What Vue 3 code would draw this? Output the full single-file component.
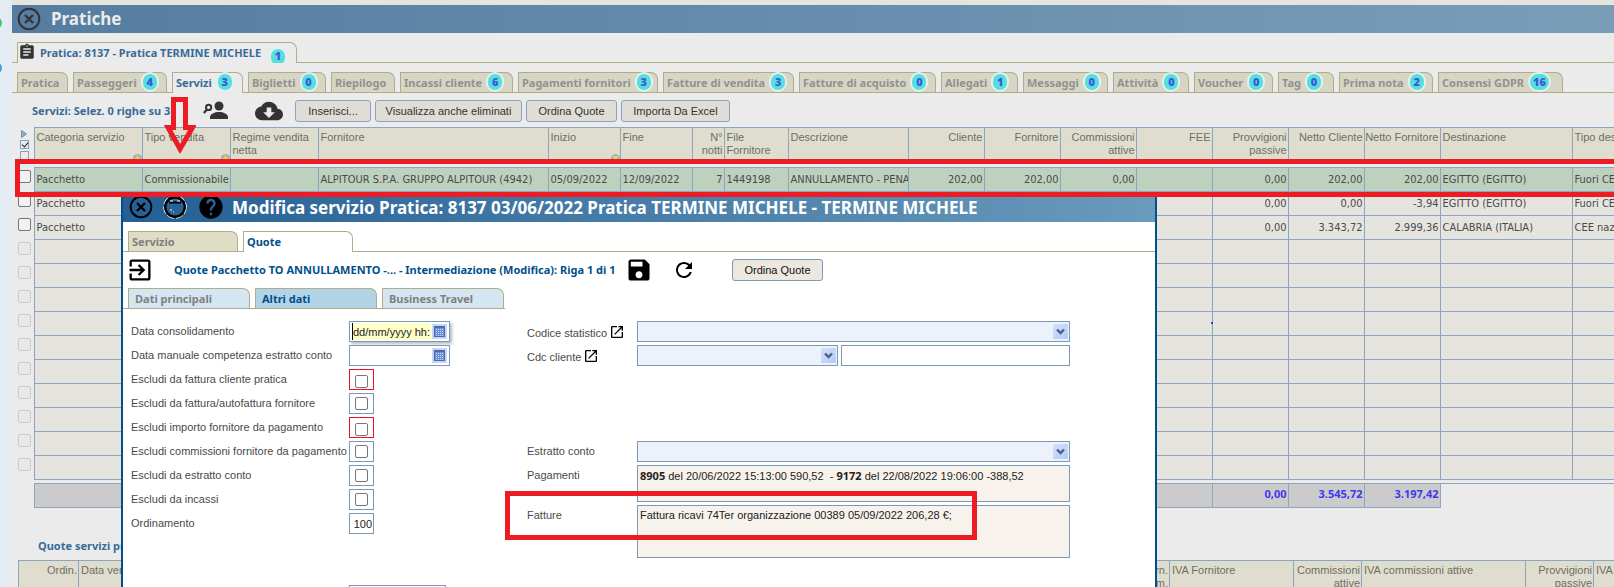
<script setup>
import { ref } from 'vue'

const tabs = [
  { t: 'Pratica', w: 51 },
  { t: 'Passeggeri', n: 4, w: 94 },
  { t: 'Servizi', n: 3, w: 71, on: true },
  { t: 'Biglietti', n: 0, w: 78 },
  { t: 'Riepilogo', w: 64 },
  { t: 'Incassi cliente', n: 6, w: 113 },
  { t: 'Pagamenti fornitori', n: 3, w: 140 },
  { t: 'Fatture di vendita', n: 3, w: 131 },
  { t: 'Fatture di acquisto', n: 0, w: 137 },
  { t: 'Allegati', n: 1, w: 77 },
  { t: 'Messaggi', n: 0, w: 85 },
  { t: 'Attività', n: 0, w: 76 },
  { t: 'Voucher', n: 0, w: 79 },
  { t: 'Tag', n: 0, w: 56 },
  { t: 'Prima nota', n: 2, w: 94 },
  { t: 'Consensi GDPR', n: 16, w: 125 },
]

const cols = [
  { t: 'Categoria servizio', w: 108, sort: 'up' },
  { t: 'Tipo vendita', w: 88, sort: 'up' },
  { t: 'Regime vendita netta', w: 88 },
  { t: 'Fornitore', w: 230 },
  { t: 'Inizio', w: 72, sort: 'down' },
  { t: 'Fine', w: 72 },
  { t: 'N° notti', w: 32, r: true },
  { t: 'File Fornitore', w: 64 },
  { t: 'Descrizione', w: 120 },
  { t: 'Cliente', w: 76, r: true },
  { t: 'Fornitore', w: 76, r: true },
  { t: 'Commissioni attive', w: 76, r: true },
  { t: 'FEE', w: 76, r: true },
  { t: 'Provvigioni passive', w: 76, r: true },
  { t: 'Netto Cliente', w: 76, r: true },
  { t: 'Netto Fornitore', w: 76, r: true },
  { t: 'Destinazione', w: 132 },
  { t: 'Tipo destinazione', w: 120 },
]

const blank = Array(18).fill('')
const rows = [
  ['Pacchetto', 'Commissionabile', '', 'ALPITOUR S.P.A. GRUPPO ALPITOUR (4942)', '05/09/2022', '12/09/2022', '7', '1449198', 'ANNULLAMENTO - PENA', '202,00', '202,00', '0,00', '', '0,00', '202,00', '202,00', 'EGITTO (EGITTO)', 'Fuori CEE'],
  ['Pacchetto', '', '', '', '', '', '', '', '', '', '', '', '', '0,00', '0,00', '-3,94', 'EGITTO (EGITTO)', 'Fuori CEE'],
  ['Pacchetto', '', '', '', '', '', '', '', '', '', '', '', '', '0,00', '3.343,72', '2.999,36', 'CALABRIA (ITALIA)', 'CEE nazionale'],
  ...Array(10).fill(blank),
]
const totals = ['', '', '', '', '', '', '', '', '', '', '', '', '', '0,00', '3.545,72', '3.197,42']

const quoteCols = [
  { t: 'Ordin.', w: 60, r: true },
  { t: 'Data vendita', w: 1023 },
  { t: 'IVA Forn. Comm.', w: 68, r: true },
  { t: 'IVA Fornitore', w: 124 },
  { t: 'Commissioni attive', w: 68, r: true },
  { t: 'IVA commissioni attive', w: 164 },
  { t: 'Provvigioni passive', w: 68, r: true },
  { t: 'IVA passive', w: 90 },
]

const checks = [
  { id: 'c1', t: 'Escludi da fattura cliente pratica', red: true },
  { id: 'c2', t: 'Escludi da fattura/autofattura fornitore' },
  { id: 'c3', t: 'Escludi importo fornitore da pagamento', red: true },
  { id: 'c4', t: 'Escludi commissioni fornitore da pagamento' },
  { id: 'c5', t: 'Escludi da estratto conto' },
  { id: 'c6', t: 'Escludi da incassi' },
]
const flags = ref(checks.map(() => false))
const order = ref('100')
const consolidation = ref('dd/mm/yyyy hh:')

const openIcon = 'M19 19H5V5h7V3H5c-1.11 0-2 .9-2 2v14c0 1.1.89 2 2 2h14c1.1 0 2-.9 2-2v-7h-2v7zM14 3v2h3.59l-9.83 9.83 1.41 1.41L19 6.41V10h2V3h-7z'
</script>

<template>
  <div class="screen">
    <aside class="rail">
      <i class="dot green"></i>
      <i class="dot blue"></i>
    </aside>

    <main class="page">
      <header class="bar">
        <button class="plain" aria-label="Chiudi pratiche">
          <svg width="24" height="24" viewBox="0 0 24 24" fill="none" stroke="#333"><circle cx="12" cy="12" r="10.3" stroke-width="2" /><path d="M8 8l8 8M16 8l-8 8" stroke-width="2.4" /></svg>
        </button>
        <h1>Pratiche</h1>
      </header>

      <div class="tabs outer">
        <button class="tab on">
          <svg width="18" height="18" viewBox="0 0 24 24" fill="#333"><path d="M19 3h-4.18C14.4 1.84 13.3 1 12 1c-1.3 0-2.4.84-2.82 2H5c-1.1 0-2 .9-2 2v14c0 1.1.9 2 2 2h14c1.1 0 2-.9 2-2V5c0-1.1-.9-2-2-2zm-7 0c.55 0 1 .45 1 1s-.45 1-1 1-1-.45-1-1 .45-1 1-1zm2 14H7v-2h7v2zm3-4H7v-2h10v2zm0-4H7V7h10v2z" /></svg>
          <span>Pratica: 8137 - Pratica TERMINE MICHELE</span>
          <b class="badge low">1</b>
        </button>
      </div>

      <nav class="tabs inner">
        <button v-for="x in tabs" :key="x.t" class="tab" :class="{ on: x.on }" :style="{ width: x.w + 'px' }">
          <span>{{ x.t }}</span><b v-if="x.n !== undefined" class="badge">{{ x.n }}</b>
        </button>
      </nav>

      <div class="tools">
        <h2>Servizi: Selez. 0 righe su 3</h2>
        <button class="plain people" aria-label="Cerca passeggero">
          <svg width="26" height="20" viewBox="0 0 26 20" fill="#333"><circle cx="16" cy="5" r="4.5" /><path d="M7 18v-2c0-3 5-5 9-5s9 2 9 5v2z" /><circle cx="5.6" cy="6.4" r="2.6" fill="none" stroke="#333" stroke-width="2" /><path d="M4 8.4L.8 12" stroke="#333" stroke-width="2.2" /></svg>
        </button>
        <button class="plain cloud" aria-label="Scarica">
          <svg width="28" height="28" viewBox="0 0 24 24" fill="#333"><path d="M19.35 10.04C18.67 6.59 15.64 4 12 4 9.11 4 6.6 5.64 5.35 8.04 2.34 8.36 0 10.91 0 14c0 3.31 2.69 6 6 6h13c2.76 0 5-2.24 5-5 0-2.64-2.05-4.78-4.65-4.96zM17 13l-5 5-5-5h3V9h4v4h3z" /></svg>
        </button>
        <div class="buttons">
          <button class="btn w76">Inserisci...</button>
          <button class="btn w147">Visualizza anche eliminati</button>
          <button class="btn w91">Ordina Quote</button>
          <button class="btn w109">Importa Da Excel</button>
        </div>
      </div>

      <div class="scroll">
        <table class="grid">
          <colgroup>
            <col class="pick" />
            <col v-for="(c, i) in cols" :key="i" :style="{ width: c.w + 'px' }" />
          </colgroup>
          <thead>
            <tr>
              <td class="pickcell">
                <div class="picker">
                  <svg width="6" height="8" viewBox="0 0 6 8"><path d="M.5.5L5.5 4 .5 7.5z" fill="#8fb0d4" stroke="#6b8fb8" /></svg>
                  <input type="checkbox" class="mini" checked aria-label="Seleziona tutti" />
                  <input type="checkbox" class="mini" aria-label="Deseleziona tutti" />
                </div>
              </td>
              <th v-for="(c, i) in cols" :key="i" :class="{ r: c.r }">
                {{ c.t }}
                <svg v-if="c.sort" class="sort" width="9" height="9" viewBox="0 0 9 9"><circle cx="4.5" cy="4.5" r="4.5" fill="#9fb3c8" /><path :d="c.sort === 'up' ? 'M4.5 1L7.5 5.5h-6z' : 'M1.5 2h6L4.5 6.5z'" fill="#f0d24a" /></svg>
              </th>
            </tr>
          </thead>
          <tbody>
            <tr class="gap"><td class="pickcell"></td><td colspan="18"></td></tr>
            <tr v-for="(row, i) in rows" :key="i" :class="{ sel: i === 0 }">
              <td class="pickcell"><input type="checkbox" class="box" :disabled="i > 2" :aria-label="'Riga ' + (i + 1)" /></td>
              <td v-for="(v, j) in row" :key="j" :class="{ r: cols[j].r }">{{ v }}</td>
            </tr>
          </tbody>
          <tfoot>
            <tr class="gap small"><td class="pickcell"></td><td colspan="18"></td></tr>
            <tr>
              <td class="pickcell"></td>
              <td v-for="(v, j) in totals" :key="j" class="total">{{ v }}</td>
            </tr>
          </tfoot>
        </table>
      </div>

      <h2 class="subhead">Quote servizi pratica</h2>
      <div class="scroll second">
        <table class="grid quotes">
          <colgroup><col v-for="(c, i) in quoteCols" :key="i" :style="{ width: c.w + 'px' }" /></colgroup>
          <thead>
            <tr>
              <th v-for="(c, i) in quoteCols" :key="i" :class="{ r: c.r }">
                {{ c.t }}
                <svg v-if="i === 0" class="sort left" width="9" height="9" viewBox="0 0 9 9"><circle cx="4.5" cy="4.5" r="4.5" fill="#9fb3c8" /><path d="M4.5 1L7.5 5.5h-6z" fill="#f0d24a" /></svg>
              </th>
            </tr>
          </thead>
        </table>
      </div>
    </main>

    <section class="modal" role="dialog" aria-label="Modifica servizio">
      <header class="mbar">
        <button class="plain" aria-label="Chiudi">
          <svg width="24" height="24" viewBox="0 0 24 24" fill="none" stroke="#000"><circle cx="12" cy="12" r="10.3" stroke-width="2" /><path d="M8 8l8 8M16 8l-8 8" stroke-width="2.4" /></svg>
        </button>
        <button class="plain" aria-label="Riduci">
          <svg width="24" height="24" viewBox="0 0 24 24" fill="none"><circle cx="12" cy="12" r="10.8" stroke="#fff" stroke-width="2" stroke-dasharray="7 2" /><circle cx="12" cy="12" r="9.8" stroke="#000" stroke-width="2.4" /><path d="M6 7.5h12" stroke="#000" stroke-width="2" /><path d="M7 6h3M14 6h3M7 15h2M10 17h1" stroke="#fff" /></svg>
        </button>
        <button class="plain" aria-label="Aiuto">
          <svg width="28" height="28" viewBox="0 0 24 24" fill="#000"><path d="M12 2C6.48 2 2 6.48 2 12s4.48 10 10 10 10-4.48 10-10S17.52 2 12 2zm1 17h-2v-2h2v2zm2.07-7.75l-.9.92C13.45 12.9 13 13.5 13 15h-2v-.5c0-1.1.45-2.1 1.17-2.83l1.24-1.26c.37-.36.59-.86.59-1.41 0-1.1-.9-2-2-2s-2 .9-2 2H8c0-2.21 1.79-4 4-4s4 1.79 4 4c0 .88-.36 1.68-.93 2.25z" /></svg>
        </button>
        <h2>Modifica servizio Pratica: 8137 03/06/2022 Pratica TERMINE MICHELE - TERMINE MICHELE</h2>
      </header>

      <div class="tabs mtabs">
        <button class="tab">Servizio</button>
        <button class="tab on">Quote</button>
      </div>

      <div class="mtools">
        <button class="plain" aria-label="Esci">
          <svg width="28" height="28" viewBox="0 0 24 24"><path d="M10.09 15.59L11.5 17l5-5-5-5-1.41 1.41L12.67 11H3v2h9.67l-2.58 2.59zM19 3H5c-1.11 0-2 .9-2 2v4h2V5h14v14H5v-4H3v4c0 1.1.89 2 2 2h14c1.1 0 2-.9 2-2V5c0-1.1-.9-2-2-2z" /></svg>
        </button>
        <h3>Quote Pacchetto TO ANNULLAMENTO -... - Intermediazione (Modifica): Riga 1 di 1</h3>
        <button class="plain" aria-label="Salva">
          <svg width="28" height="28" viewBox="0 0 24 24"><path d="M17 3H5c-1.11 0-2 .9-2 2v14c0 1.1.89 2 2 2h14c1.1 0 2-.9 2-2V7l-4-4zm-5 16c-1.66 0-3-1.34-3-3s1.34-3 3-3 3 1.34 3 3-1.34 3-3 3zm3-10H5V5h10v4z" /></svg>
        </button>
        <button class="plain reload" aria-label="Aggiorna">
          <svg width="24" height="24" viewBox="0 0 24 24"><path d="M17.65 6.35C16.2 4.9 14.21 4 12 4c-4.42 0-7.99 3.58-7.99 8s3.57 8 7.99 8c3.73 0 6.84-2.55 7.73-6h-2.08c-.82 2.33-3.04 4-5.65 4-3.31 0-6-2.69-6-6s2.69-6 6-6c1.66 0 3.14.69 4.22 1.78L13 11h7V4l-2.35 2.35z" /></svg>
        </button>
        <button class="btn w91 light">Ordina Quote</button>
      </div>

      <div class="tabs stabs">
        <button class="tab">Dati principali</button>
        <button class="tab cur">Altri dati</button>
        <button class="tab">Business Travel</button>
      </div>

      <form class="form" @submit.prevent>
        <div class="fields lefts">
          <label for="d1">Data consolidamento</label>
          <div class="date hot"><input id="d1" v-model="consolidation" /><button type="button" class="cal" aria-label="Apri calendario"><i></i></button></div>
          <label for="d2">Data manuale competenza estratto conto</label>
          <div class="date"><input id="d2" /><button type="button" class="cal" aria-label="Apri calendario"><i></i></button></div>
          <template v-for="(c, i) in checks" :key="c.id">
            <label :for="c.id">{{ c.t }}</label>
            <div class="tick" :class="{ red: c.red }"><input :id="c.id" v-model="flags[i]" type="checkbox" class="box" /></div>
          </template>
          <label for="ord">Ordinamento</label>
          <input id="ord" v-model="order" class="num" />
          <span></span><span></span><span></span><span></span>
          <span></span>
          <input class="extra" aria-label="Altro" />
        </div>

        <div class="fields rights">
          <label for="s1">Codice statistico <svg width="16" height="16" viewBox="0 0 24 24"><path :d="openIcon" /></svg></label>
          <div class="sel-wrap"><select id="s1"></select><span class="arrow"><svg width="9" height="7" viewBox="0 0 9 7"><path d="M1 1.5l3.5 3.5L8 1.5" fill="none" stroke="#4d6185" stroke-width="2.4" /></svg></span></div>
          <label for="s2">Cdc cliente <svg width="16" height="16" viewBox="0 0 24 24"><path :d="openIcon" /></svg></label>
          <div class="pair">
            <div class="sel-wrap"><select id="s2"></select><span class="arrow"><svg width="9" height="7" viewBox="0 0 9 7"><path d="M1 1.5l3.5 3.5L8 1.5" fill="none" stroke="#4d6185" stroke-width="2.4" /></svg></span></div>
            <input class="text" aria-label="Descrizione cdc" />
          </div>
          <span class="hole"></span>
          <label for="s3">Estratto conto</label>
          <div class="sel-wrap"><select id="s3"></select><span class="arrow"><svg width="9" height="7" viewBox="0 0 9 7"><path d="M1 1.5l3.5 3.5L8 1.5" fill="none" stroke="#4d6185" stroke-width="2.4" /></svg></span></div>
          <span class="lab">Pagamenti</span>
          <div class="memo short"><b>8905</b> del 20/06/2022 15:13:00 590,52 &nbsp;- <b>9172</b> del 22/08/2022 19:06:00 -388,52</div>
          <span class="lab">Fatture</span>
          <div class="memo">Fattura ricavi 74Ter organizzazione 00389 05/09/2022 206,28 €;</div>
        </div>
      </form>
    </section>

    <i class="speck"></i>
    <div class="mark row-mark"></div>
    <div class="mark inv-mark"></div>
    <svg class="down" width="32" height="58" viewBox="0 0 32 58"><path d="M9.5 2.5h12v28h7L16 52 4 30.5h5.5z" fill="none" stroke="#ed1c24" stroke-width="5" /></svg>
  </div>
</template>

<style>
html, body { margin: 0; }
</style>

<style scoped>
* { box-sizing: border-box; }
.screen {
  position: relative; display: flex; height: 100vh; overflow: hidden; background: #ebebeb;
  font-family: Tahoma, "Liberation Sans", "Noto Sans", sans-serif; font-size: 11px; line-height: 13px; color: #4a4a4a;
}
button, input, select { font: inherit; color: inherit; margin: 0; }
h1, h2, h3 { margin: 0; }
h1, h2, h3, b, .tab, .grid .total { font-family: Tahoma, "Noto Sans", sans-serif; }
.rail { position: relative; flex: 0 0 12px; background: #e4ebf3; }
.dot { position: absolute; left: -10px; width: 12px; height: 12px; border-radius: 6px; }
.green { top: 17px; background: #35cf70; }
.blue { top: 62px; background: #35a3dc; }
.page { flex: 1; min-width: 0; border-top: 5px solid #e6e4df; }
.plain { display: flex; align-items: center; justify-content: center; padding: 0; border: 0; background: none; }
.bar { display: flex; align-items: center; gap: 10px; height: 28px; padding-left: 5px; background: linear-gradient(90deg, #557da1, #7a9db8); }
.bar h1 { font-size: 17px; line-height: 20px; color: #ebebeb; }

.tabs { display: flex; align-items: flex-end; gap: 5px; padding-left: 5px; border-bottom: 1px solid #b1ad8c; }
.tab {
  display: flex; align-items: center; height: 20px; padding: 0 0 1px 3px; border: 1px solid #b1ad8c; border-bottom: 0;
  border-radius: 0 7px 0 0; background: #d7d5c4; color: #919191; font-weight: bold; white-space: nowrap;
}
.tab.on { height: 21px; margin-bottom: -1px; padding-bottom: 2px; background: #ebebeb; color: #376b98; }
.outer { height: 30px; }
.outer .tab { height: 21px; padding-left: 0; width: 280px; gap: 4px; overflow: hidden; }
.outer .low { margin: 4px 0 0 4px; line-height: 14px; }
.inner { height: 30px; }
.inner .tab { flex: none; }
.badge {
  flex: none; min-width: 18px; height: 20px; margin-left: 4px; padding: 0 3px; border: 2px solid #e2f1f0; border-radius: 10px;
  background: #56e0dc; color: #4257e0; line-height: 16px; text-align: center;
}
.low { align-self: flex-start; }

.tools { display: flex; align-items: center; height: 34px; padding: 2px 0 0 20px; }
.tools h2, .subhead { font-size: 11px; line-height: 13px; color: #376b98; }
.tools h2 { width: 170px; padding-bottom: 2px; white-space: nowrap; }
.people { width: 27px; }
.cloud { margin-left: 26px; }
.buttons { display: flex; gap: 4px; margin-left: 12px; }
.btn { height: 22px; padding: 0; border: 1px solid #8aa3be; border-radius: 3px; background: #e0dcd6; color: #333; white-space: nowrap; }
.light { background: #ece7df; border-color: #7c9ab5; color: #111; }
.w76 { width: 76px; }
.w147 { width: 147px; }
.w91 { width: 91px; }
.w109 { width: 109px; }

.scroll { overflow: hidden; padding-left: 5px; }
.grid { width: 1675px; table-layout: fixed; border-collapse: collapse; }
.pick { width: 17px; }
.grid td, .grid th { height: 24px; padding: 0 1px 0 2px; border: 1px solid #8ea5c0; background: #e5e4df; text-align: left; font-weight: normal; white-space: nowrap; overflow: hidden; }
.grid tbody td { font-family: Tahoma, "DejaVu Sans Condensed", "DejaVu Sans", sans-serif; }
.grid th { position: relative; height: 34px; padding: 3px 1px 0 2px; vertical-align: top; white-space: normal; background: #dfddce; color: #6e6e66; }
.grid .r { text-align: right; padding-left: 0; }
.grid .pickcell { padding: 0; border: 0; background: none; vertical-align: top; }
.grid .sel td:not(.pickcell) { background: #bed1be; }
.grid .gap td { height: 6px; padding: 0; border-width: 1px 0; background: none; }
.grid .gap .pickcell { border: 0; }
.grid .small td { height: 4px; }
.grid .total { background: #cbcbcb; color: #4038ee; font-weight: bold; text-align: right; padding: 3px 1px 0; vertical-align: top; }
.sort { position: absolute; right: 0; bottom: -2px; }
.sort.left { right: auto; left: 1px; }
.picker { display: flex; flex-direction: column; align-items: center; gap: 2px; padding: 2px 2px 0 0; }
.mini { appearance: none; position: relative; width: 9px; height: 9px; border: 1px solid #86a3c4; background: #ebebeb; }
.mini:checked::after { content: ""; position: absolute; left: 2px; top: 0; width: 3px; height: 5px; border: solid #222; border-width: 0 1px 1px 0; transform: rotate(40deg); }
.box { appearance: none; display: block; width: 13px; height: 13px; border: 1px solid #767676; border-radius: 2px; background: #f2f2f2; }
.pickcell .box { margin: 2px 0 0 1px; }
.box:disabled { border-color: #cbcbcb; background: #e8e8e8; }
.subhead { padding: 31px 0 8px 26px; }
.second { padding-left: 6px; }
.quotes { width: 1665px; }
.quotes th { height: 36px; }

.modal { position: absolute; top: 192px; left: 121px; right: 457px; bottom: -20px; border: solid #00508c; border-width: 0 2px; background: #fff; overflow: hidden; }
.mbar { display: flex; align-items: center; gap: 10px; height: 30px; padding-left: 6px; background: linear-gradient(90deg, #246094, #6a9abc); }
.mbar h2 { margin-left: -3px; padding-top: 2px; font-size: 17px; line-height: 20px; color: #fff; white-space: nowrap; }
.modal .tab { background: #dfddc6; color: #808080; }
.modal .tab.on { background: #fff; color: #00508c; }
.mtabs { height: 30px; }
.mtabs .tab { width: 110px; }
.mtools { display: flex; align-items: center; height: 36px; padding-left: 3px; }
.mtools h3 { width: 440px; margin-left: 20px; padding-bottom: 2px; font-size: 11px; line-height: 13px; color: #00508c; white-space: nowrap; }
.mtools > button:nth-of-type(2) { margin-left: 11px; }
.reload { margin-left: 19px; }
.mtools .btn { margin-left: 36px; }
.stabs { width: 382px; height: 21px; }
.stabs .tab { width: 122px; padding-left: 6px; }
.modal .stabs .tab { background: #d4e6f2; }
.modal .stabs .cur { background: #b3d3e6; color: #00508c; }

.form { display: flex; gap: 77px; padding: 12px 0 0 8px; }
.fields { display: grid; align-content: start; }
.fields label, .lab { padding-top: 4px; white-space: nowrap; }
.lefts { grid-template-columns: 218px 101px; grid-auto-rows: 24px; }
.rights { grid-template-columns: 110px 433px; grid-template-rows: 24px 24px 72px 24px 40px 56px; }
.rights label { display: flex; align-items: center; gap: 2px; height: 21px; padding-top: 4px; }
.rights label svg { margin-bottom: 4px; }
.rights label[for="s3"] { padding-top: 0; }
.hole { grid-column: 1 / 3; }
.date { display: flex; align-items: center; width: 101px; height: 21px; padding: 1px 2px; border: 1px solid #7c9ab5; background: #fff; }
.date input { flex: 1; min-width: 0; padding: 0 0 0 1px; border: 0; background: none; outline: 0; height: 17px; color: #222; }
.hot { box-shadow: 2px 2px 3px #bbb; }
.hot input { background: #ffffc8; border-left: 1px solid #000; padding-left: 0; }
.cal { display: flex; align-items: center; justify-content: center; width: 15px; height: 15px; margin-left: 1px; padding: 0; border: 0; background: #c6d6fb; }
.cal i { width: 11px; height: 11px; border: 1px solid #4d6ba3; border-top-width: 2px; background: repeating-linear-gradient(90deg, #6d8fd6 0 1px, transparent 1px 2px), repeating-linear-gradient(#6d8fd6 0 1px, #c9d9fb 1px 2px); }
.tick { display: flex; align-items: center; justify-content: center; width: 25px; height: 21px; border: 1px solid #7c9ab5; }
.tick .box { background: #fff; }
.tick.red { border-color: #e8141c; padding-top: 4px; }
.num { width: 25px; height: 21px; padding: 0 1px 0 0; border: 1px solid #7c9ab5; text-align: right; color: #222; }
.extra { width: 97px; height: 21px; border: 1px solid #7c9ab5; }
.sel-wrap { position: relative; height: 21px; }
select { display: block; appearance: none; width: 100%; height: 21px; border: 1px solid #7c9ab5; border-radius: 0; background: #ecf1fa; }
.arrow { position: absolute; top: 3px; right: 2px; display: flex; align-items: center; justify-content: center; width: 15px; height: 15px; background: linear-gradient(135deg, #d3dffc, #b4cbf8); pointer-events: none; }
.pair { display: grid; grid-template-columns: 201px 1fr; gap: 3px; }
.text { min-width: 0; height: 21px; border: 1px solid #7c9ab5; }
.memo { height: 53px; padding: 3px 2px; border: 1px solid #7c9ab5; background: #f7f3ec; color: #222; white-space: nowrap; }
.short { height: 37px; }

.mark { position: absolute; border: 5px solid #ed1c24; pointer-events: none; }
.row-mark { top: 159px; left: 15px; right: -10px; height: 38px; }
.inv-mark { top: 491px; left: 505px; width: 472px; height: 49px; }
.down { position: absolute; top: 97px; left: 164px; }
.speck { position: absolute; top: 322px; left: 1211px; width: 2px; height: 2px; background: #3030f0; }
</style>
